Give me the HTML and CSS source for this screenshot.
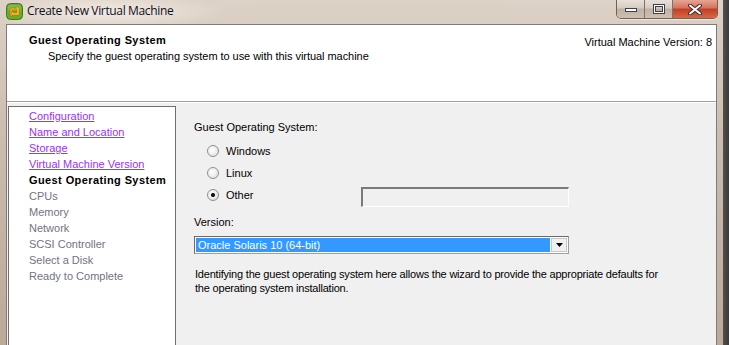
FILE: index.html
```html
<!DOCTYPE html>
<html lang="en">
<head>
  <meta charset="UTF-8">
  <title>Create New Virtual Machine</title>
  <link rel="stylesheet" href="styles.css">
</head>
<body>

  <div class="window">
    <div class="titlebar">
      <svg class="app-icon" width="17" height="17" viewBox="0 0 17 17">
        <rect x="0.5" y="0.5" width="16" height="16" rx="4" fill="#6aaa2e" stroke="#3d7a1a"/>
        <rect x="2" y="2" width="13" height="6" rx="2" fill="#8cc84b" opacity="0.6"/>
        <path d="M4 6.5 a1.5 1.5 0 0 1 1.5 -1.5 h4.5 a1.5 1.5 0 0 1 1.5 1.5 v1.5 h-2 v-1 h-3.5 v4 h1 v2 h-1.5 a1.5 1.5 0 0 1 -1.5 -1.5 z" fill="#f3b21a" stroke="#b86d0c" stroke-width="0.6"/>
        <path d="M13 10.5 a1.5 1.5 0 0 1 -1.5 1.5 h-4.5 a1.5 1.5 0 0 1 -1.5 -1.5 v-1.5 h2 v1 h3.5 v-4 h-1 v-2 h1.5 a1.5 1.5 0 0 1 1.5 1.5 z" fill="#f7cf3c" stroke="#b86d0c" stroke-width="0.6"/>
      </svg>
      <span class="title-text">Create New Virtual Machine</span>
      <div class="controls">
        <div class="ctl-btn">
          <svg width="14" height="8" viewBox="0 0 14 8"><rect x="1.5" y="3.5" width="11" height="3" fill="#fff" stroke="#3c3f48"/></svg>
        </div>
        <div class="ctl-btn">
          <svg width="12" height="10" viewBox="0 0 12 10"><rect x="1.5" y="1.5" width="9" height="7" fill="none" stroke="#3c3f48" stroke-width="3"/><rect x="1.5" y="1.5" width="9" height="7" fill="none" stroke="#fff" stroke-width="1"/></svg>
        </div>
        <div class="ctl-btn close">
          <svg width="16" height="11" viewBox="0 0 16 11"><path d="M3 1.5 L13 9.5 M13 1.5 L3 9.5" stroke="#4a2a26" stroke-width="4" stroke-linecap="round"/><path d="M3 1.5 L13 9.5 M13 1.5 L3 9.5" stroke="#fff" stroke-width="2" stroke-linecap="round"/></svg>
        </div>
      </div>
    </div>

    <div class="client">
      <div class="header">
        <div class="header-text">
          <div class="header-title">Guest Operating System</div>
          <div class="header-sub">Specify the guest operating system to use with this virtual machine</div>
        </div>
        <div class="header-version">Virtual Machine Version: 8</div>
      </div>

      <div class="main">
        <ul class="steps">
          <li class="done">Configuration</li>
          <li class="done">Name and Location</li>
          <li class="done">Storage</li>
          <li class="done">Virtual Machine Version</li>
          <li class="current">Guest Operating System</li>
          <li>CPUs</li>
          <li>Memory</li>
          <li>Network</li>
          <li>SCSI Controller</li>
          <li>Select a Disk</li>
          <li>Ready to Complete</li>
        </ul>

        <div class="panel">
          <div class="field-label">Guest Operating System:</div>
          <div class="radio-group">
            <label class="radio-row"><input type="radio" name="os"> Windows</label>
            <label class="radio-row"><input type="radio" name="os"> Linux</label>
            <div class="radio-row other-row">
              <label class="radio-row"><input type="radio" name="os" checked> Other</label>
              <div class="other-box"></div>
            </div>
          </div>

          <div class="field-label version-label">Version:</div>
          <div class="select">
            <div class="select-value">Oracle Solaris 10 (64-bit)</div>
            <div class="select-btn">
              <svg width="7" height="4" viewBox="0 0 7 4"><path d="M0 0 H7 L3.5 4 Z" fill="#000"/></svg>
            </div>
          </div>

          <p class="description">Identifying the guest operating system here allows the wizard to provide the appropriate defaults for the operating system installation.</p>
        </div>
      </div>
    </div>
  </div>

</body>
</html>
```

FILE: styles.css
```css
body {
  margin: 0;
  width: 729px;
  height: 345px;
  overflow: hidden;
  font-family: 'Liberation Sans', Arial, sans-serif;
  font-size: 11px;
  color: #000;
}

.window {
  height: 345px;
  padding: 0 12px 0 6px;
  background:
    linear-gradient(90deg, transparent 723px, #50504e 723px, #3a3a3a 729px),
    linear-gradient(180deg, #ddd2c7 0, #cbbcae 40%, #bca998 100%);
  display: flex;
  flex-direction: column;
}

.titlebar {
  height: 24px;
  display: flex;
  align-items: flex-start;
  background: radial-gradient(ellipse 120px 18px at 100px 12px, rgba(245, 238, 230, 0.9), rgba(245, 238, 230, 0));
}

.app-icon {
  margin-top: 3px;
  flex: none;
}

.title-text {
  font-family: 'Open Sans', 'Noto Sans', sans-serif;
  font-size: 12px;
  color: #10101e;
  margin-left: 4px;
  margin-top: 3px;
  line-height: 16px;
  letter-spacing: -0.35px;
}

.controls {
  margin-left: auto;
  margin-right: -1px;
  display: flex;
  height: 18px;
  border: 1px solid #6f6357;
  border-top: none;
  border-radius: 0 0 5px 5px;
  overflow: hidden;
  box-shadow: 0 1px 0 rgba(255, 255, 255, 0.5);
}

.ctl-btn {
  width: 27px;
  display: flex;
  align-items: center;
  justify-content: center;
  background: linear-gradient(180deg, #e8e0d8 0, #d6cbc0 45%, #bfb0a2 50%, #cdc0b3 100%);
  border-right: 1px solid #7e7367;
}

.ctl-btn.close {
  width: 44px;
  border-right: none;
  background: linear-gradient(180deg, #e6a593 0, #d9705a 45%, #c33d22 50%, #d5694a 100%);
}

.client {
  flex: 1;
  border: 1px solid #7c7c7c;
  border-bottom: none;
  background: #f0f0f0;
  display: flex;
  flex-direction: column;
}

.header {
  height: 76px;
  background: #fff;
  border-bottom: 1px solid #a0a0a0;
  display: flex;
  justify-content: space-between;
  align-items: flex-start;
  padding: 0 4px 0 22px;
  box-shadow: 0 1px 0 #fff;
}

.header-title {
  font-weight: bold;
  margin-top: 8px;
  line-height: 14px;
  letter-spacing: 0.4px;
}

.header-sub {
  margin-left: 19px;
  margin-top: 2px;
  line-height: 14px;
  letter-spacing: -0.05px;
}

.header-version {
  margin-top: 10px;
  line-height: 14px;
}

.main {
  flex: 1;
  display: flex;
  padding: 4px 0 0 1px;
}

.steps {
  list-style: none;
  margin: 0;
  width: 146px;
  padding: 1px 0 0 20px;
  background: #fff;
  border: 1px solid #6e6e6e;
  border-bottom: none;
}

.steps li {
  line-height: 16px;
  color: #737380;
}

.steps li.done {
  color: #9933ee;
  text-decoration: underline;
}

.steps li.current {
  color: #000;
  font-weight: bold;
  letter-spacing: 0.4px;
}

.panel {
  flex: 1;
  padding: 13px 0 0 18px;
}

.field-label {
  line-height: 16px;
}

.radio-group {
  margin-top: 5px;
  padding-left: 13px;
}

.radio-row {
  height: 22px;
  display: flex;
  align-items: center;
}

.radio-row input {
  appearance: none;
  -webkit-appearance: none;
  width: 12px;
  height: 12px;
  margin: 0 7px 0 0;
  border: 1px solid #8e8f8f;
  border-radius: 50%;
  background: radial-gradient(circle at 40% 40%, #ffffff 0, #f0f0f0 45%, #d4d4d4 100%);
  box-sizing: border-box;
}

.radio-row input:checked {
  background:
    radial-gradient(circle, #1a1a1a 0 1.8px, transparent 2.3px),
    radial-gradient(circle at 40% 40%, #ffffff 0, #f0f0f0 45%, #d4d4d4 100%);
}

.other-row {
  height: 22px;
}

.other-box {
  margin-left: 107px;
  margin-top: 3px;
  width: 205px;
  height: 17px;
  border: 1px solid #fff;
  border-top: 2px solid #7a7a7a;
  border-left: 2px solid #7a7a7a;
  background: #f0f0f0;
}

.version-label {
  margin-top: 8px;
}

.select {
  margin-top: 6px;
  width: 375px;
  height: 18px;
  box-sizing: border-box;
  border: 1px solid #a0a0a0;
  border-top-color: #6a6a6a;
  border-left-color: #6a6a6a;
  display: flex;
  background: #fff;
  padding: 1px;
}

.select-value {
  flex: 1;
  background: #3399ff;
  color: #fff;
  line-height: 14px;
  padding-left: 2px;
}

.select-btn {
  width: 16px;
  margin-left: 1px;
  background: #f0f0f0;
  border: 1px solid #c8c8c8;
  box-sizing: border-box;
  display: flex;
  align-items: center;
  justify-content: center;
}

.description {
  margin: 13px 0 0 1px;
  line-height: 14px;
  width: 474px;
  letter-spacing: -0.2px;
}
```
